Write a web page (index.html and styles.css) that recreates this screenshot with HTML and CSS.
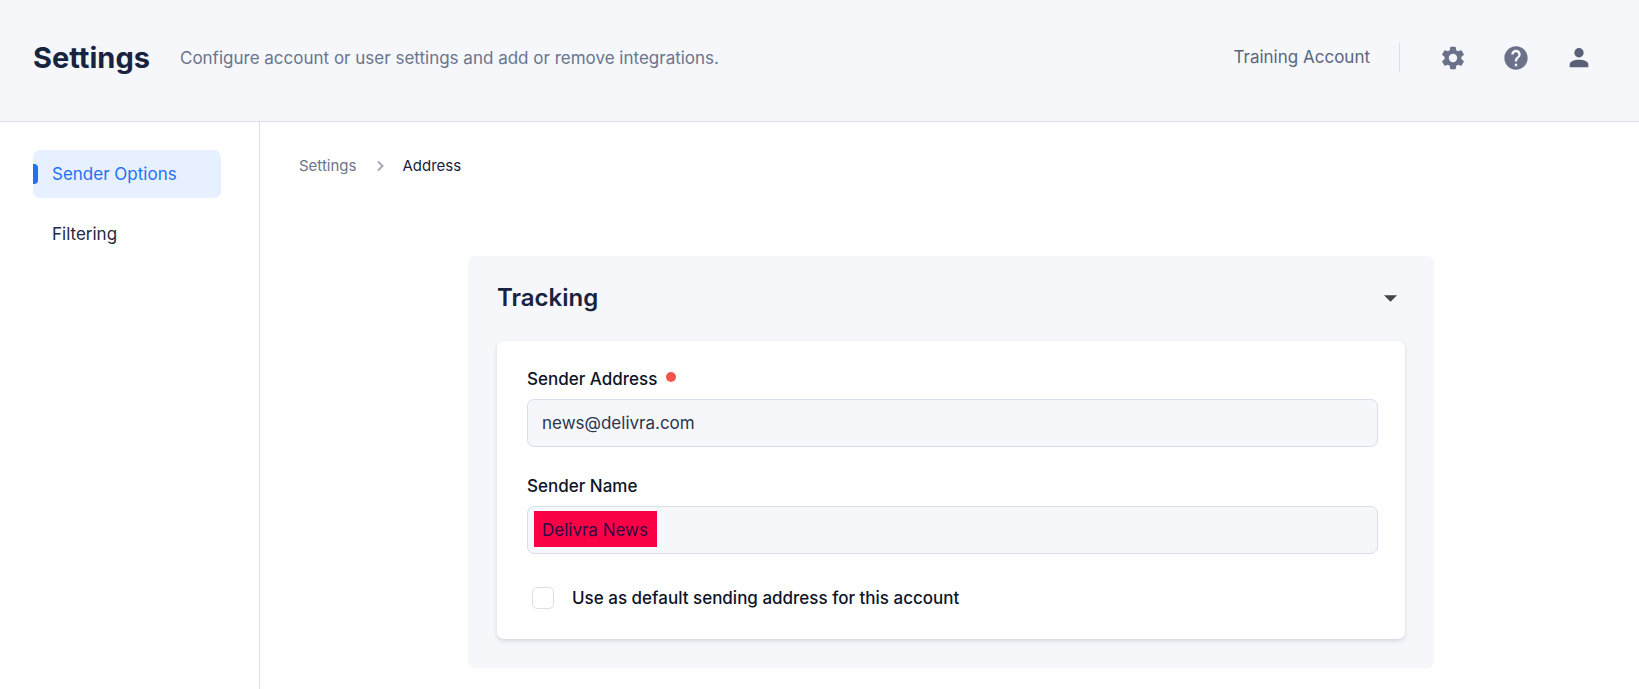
FILE: index.html
```
<!DOCTYPE html>
<html lang="en">
<head>
    <meta charset="UTF-8">
    <meta name="viewport" content="width=device-width, initial-scale=1.0">
    <title>Settings</title>
    <link rel="stylesheet" href="styles.css">
</head>
<body>

    <header class="header">
        <h1>Settings</h1>
        <p class="subtitle">Configure account or user settings and add or remove integrations.</p>
        <div class="account">
            <span class="account-name">Training Account</span>
            <button class="icon-btn" type="button" aria-label="Account settings">
                <svg viewBox="0 0 24 24"><path d="M19.14 12.94c.04-.3.06-.61.06-.94 0-.32-.02-.64-.07-.94l2.03-1.58a.49.49 0 0 0 .12-.61l-1.92-3.32a.488.488 0 0 0-.59-.22l-2.39.96c-.5-.38-1.03-.7-1.62-.94L14.4 2.81a.484.484 0 0 0-.48-.41h-3.84c-.24 0-.43.17-.47.41l-.36 2.54c-.59.24-1.13.57-1.62.94l-2.39-.96a.477.477 0 0 0-.59.22L2.74 8.87c-.12.21-.08.47.12.61l2.03 1.58c-.05.3-.09.63-.09.94s.02.64.07.94l-2.03 1.58a.49.49 0 0 0-.12.61l1.92 3.32c.12.22.37.29.59.22l2.39-.96c.5.38 1.03.7 1.62.94l.36 2.54c.05.24.24.41.48.41h3.84c.24 0 .44-.17.47-.41l.36-2.54c.59-.24 1.13-.56 1.62-.94l2.39.96c.22.08.47 0 .59-.22l1.92-3.32c.12-.22.07-.47-.12-.61zM12 15.6A3.6 3.6 0 1 1 12 8.4a3.6 3.6 0 0 1 0 7.2z"/></svg>
            </button>
            <button class="icon-btn" type="button" aria-label="Help">
                <svg viewBox="0 0 24 24"><path d="M12 2C6.48 2 2 6.48 2 12s4.48 10 10 10 10-4.48 10-10S17.52 2 12 2zm1 17h-2v-2h2zm2.07-7.75-.9.92C13.45 12.9 13 13.5 13 15h-2v-.5c0-1.1.45-2.1 1.17-2.83l1.24-1.26c.37-.36.59-.86.59-1.41 0-1.1-.9-2-2-2s-2 .9-2 2H8c0-2.21 1.79-4 4-4s4 1.79 4 4c0 .88-.36 1.68-.93 2.25z"/></svg>
            </button>
            <button class="icon-btn user" type="button" aria-label="Profile">
                <svg viewBox="0 0 24 24"><circle cx="12" cy="7.5" r="4"/><path d="M12 13.500c-4.500 0-8 1.600-8 4.200V20h16v-2.300C20 15.100 16.500 13.500 12 13.500z"/></svg>
            </button>
        </div>
    </header>

    <div class="layout">
        <nav class="sidebar" aria-label="Settings sections">
            <a class="nav-link active" href="#">Sender Options</a>
            <a class="nav-link" href="#">Filtering</a>
        </nav>

        <main class="content">
            <nav class="breadcrumb" aria-label="Breadcrumb">
                <a href="#">Settings</a>
                <svg viewBox="0 0 8 12"><path d="M1 1.500 5.500 6 1 10.500"/></svg>
                <span>Address</span>
            </nav>

            <section class="panel">
                <div class="panel-header">
                    <h2>Tracking</h2>
                    <button class="toggle" type="button" aria-label="Collapse Tracking">
                        <svg viewBox="0 0 14 7"><path d="M0 0h14L7 7z"/></svg>
                    </button>
                </div>

                <form class="card">
                    <label class="required" for="sender-address">Sender Address</label>
                    <input class="field" id="sender-address" type="text" value="news@delivra.com">

                    <label for="sender-name">Sender Name</label>
                    <input class="field highlight" id="sender-name" type="text" value="Delivra News">

                    <div class="check-row">
                        <input class="checkbox" id="default-address" type="checkbox">
                        <label for="default-address">Use as default sending address for this account</label>
                    </div>
                </form>
            </section>
        </main>
    </div>

</body>
</html>
```
FILE: styles.css
```
* {
    box-sizing: border-box;
}

body {
    margin: 0;
    min-height: 100vh;
    display: flex;
    flex-direction: column;
    font-family: Inter, sans-serif;
    font-size: 17px;
    line-height: 24px;
    color: #0d1428;
    background: white;
}

h1, h2, p {
    margin: 0;
}

h1, h2 {
    color: #18233f;
}

a {
    color: inherit;
    text-decoration: none;
}

button {
    padding: 0;
    border: none;
    background: none;
    cursor: pointer;
}

svg {
    display: block;
}

/* Header */
.header {
    display: flex;
    align-items: center;
    padding: 40px 46px 46px 33px;
    background: #f5f7fb;
    border-bottom: 1px solid #dcdeeb;
}

h1 {
    font-size: 29px;
    font-weight: 700;
    line-height: 35px;
}

.subtitle {
    margin-left: 30px;
    color: #6a748c;
}

.account {
    display: flex;
    align-items: center;
    margin-left: auto;
    gap: 35px;
    color: #5c657b;
}

.account-name {
    padding-right: 29px;
    margin-right: 4px;
    border-right: 1px solid #dcdeeb;
    line-height: 29px;
}

.icon-btn svg {
    width: 28px;
    height: 28px;
    fill: #6a7189;
}

.icon-btn.user svg {
    fill: #5a6076;
}

/* Sidebar */
.layout {
    display: flex;
    flex: 1;
}

.sidebar {
    display: flex;
    flex-direction: column;
    flex-shrink: 0;
    gap: 12px;
    width: 260px;
    padding: 28px 38px 28px 33px;
    border-right: 1px solid #dcdeeb;
}

.nav-link {
    position: relative;
    padding: 12px 19px;
    border-radius: 7px;
    color: #1f2a44;
}

.nav-link.active {
    background: #e7f0ff;
    color: #2271f5;
}

.nav-link.active::before {
    content: "";
    position: absolute;
    left: 0;
    top: 14px;
    width: 5px;
    height: 20px;
    border-radius: 0 4px 4px 0;
    background: #2271f5;
}

/* Content */
.content {
    flex: 1;
    padding: 32px 36px 19px 39px;
}

.breadcrumb {
    display: flex;
    align-items: center;
    font-size: 15px;
    color: #6a748c;
}

.breadcrumb svg {
    width: 8px;
    height: 12px;
    margin: 0 17px 0 21px;
    fill: none;
    stroke: #a5abbd;
    stroke-width: 2;
}

.breadcrumb span {
    color: #18233f;
}

.panel {
    max-width: 966px;
    margin: 78px auto 0;
    padding: 28px 29px 29px;
    border-radius: 7px;
    background: #f5f7fb;
}

.panel-header {
    display: flex;
    align-items: center;
    justify-content: space-between;
    padding-right: 8px;
    margin-bottom: 29px;
}

h2 {
    font-size: 24px;
    font-weight: 600;
    line-height: 28px;
}

.toggle svg {
    width: 13px;
    height: 7px;
    fill: #444444;
}

.card {
    display: flex;
    flex-direction: column;
    padding: 26px 27px 24px 30px;
    border-radius: 7px;
    background: white;
    box-shadow: 0 2px 4px rgba(24, 35, 63, 0.15);
}

.card label {
    font-weight: 500;
}

.required::after {
    content: "";
    display: inline-block;
    width: 10px;
    height: 10px;
    margin-left: 9px;
    border-radius: 50%;
    vertical-align: 3px;
    background: #f2554c;
}

.field {
    width: 100%;
    height: 48px;
    margin: 8px 0 27px;
    padding: 0 14px;
    border: 1px solid #dadeeb;
    border-radius: 7px;
    font: inherit;
    color: #2b3550;
    background: #f5f7fb;
}

.field.highlight {
    color: #2d0a45;
    background: linear-gradient(#fa0044, #fa0044) 6px 4px / 123px 36px no-repeat, #f5f7fb;
}

.check-row {
    display: flex;
    align-items: center;
    gap: 18px;
    padding: 5px;
}

.checkbox {
    appearance: none;
    width: 22px;
    height: 22px;
    margin: 0;
    border: 1px solid #dcdeeb;
    border-radius: 5px;
    background: white;
}

.checkbox:checked {
    background: #2271f5;
}
```
